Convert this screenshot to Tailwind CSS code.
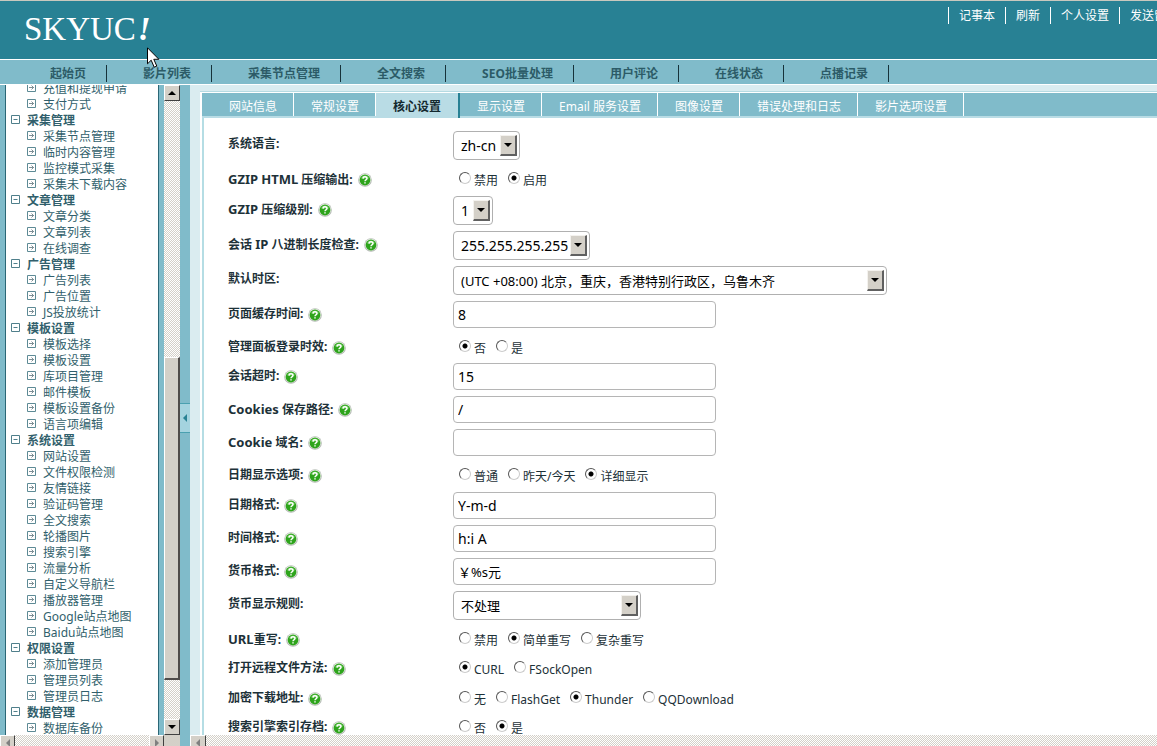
<!DOCTYPE html>
<html lang="zh-CN">
<head>
<meta charset="utf-8">
<title>SKYUC! 核心设置</title>
<script src="https://cdn.jsdelivr.net/npm/@tailwindcss/browser@4"></script>
</head>
<body class="h-screen overflow-hidden flex flex-col bg-[#80bbca] font-['Noto_Sans','Noto_Sans_CJK_SC',sans-serif] text-xs leading-4">

<svg class="hidden">
  <symbol id="minus" viewBox="0 0 10 10"><path d="M.5 .5h8v8h-8zM2.500 4.500h4" fill="none" stroke="#4f7f8b"/></symbol>
  <symbol id="leaf" viewBox="0 0 10 10"><path d="M.5 .5h8v8h-8z" fill="none" stroke="#5d8a95"/><path d="M2 4.500h5M4.500 2.500l2 2l-2 2" fill="none" stroke="#7d8f95"/></symbol>
  <symbol id="help" viewBox="0 0 14 14"><circle cx="7" cy="7" r="6.800" fill="#b3b9b3"/><circle cx="7" cy="6.800" r="6" fill="#e8f0e4"/><circle cx="7" cy="7" r="5.400" fill="#2ea41c"/><path d="M3 5.500a4.200 4.200 0 0 1 8 0z" fill="#6cc95a"/><path d="M5 5.600c.1-2.400 4-2.300 4 0c0 1.400-2 1.300-2 2.600M7 9.300v1.300" fill="none" stroke="#fff" stroke-width="1.500"/></symbol>
  <symbol id="down" viewBox="0 0 8 4"><path d="M0 0h8l-4 4z"/></symbol>
  <symbol id="up" viewBox="0 0 8 4"><path d="M0 4h8l-4-4z"/></symbol>
  <symbol id="left" viewBox="0 0 4 8"><path d="M4 0v8l-4-4z"/></symbol>
  <symbol id="right" viewBox="0 0 4 8"><path d="M0 0v8l4-4z"/></symbol>
</svg>

<header class="shrink-0 flex justify-between h-[59px] bg-[#288194] border-t border-[#c9c8be] text-white">
  <h1 class="pl-6 pt-2 font-['Liberation_Serif',serif] text-[33px] leading-10 flex gap-0.5">SKYUC<em class="font-bold">!</em></h1>
  <nav class="w-[209px] shrink-0 overflow-hidden flex items-start pt-1.5 whitespace-nowrap">
    <a href="#" class="shrink-0 border-l border-white px-2.5 leading-[17px]">记事本</a>
    <a href="#" class="shrink-0 border-l border-white px-2.5 leading-[17px]">刷新</a>
    <a href="#" class="shrink-0 border-l border-white px-2.5 leading-[17px]">个人设置</a>
    <a href="#" class="shrink-0 border-l border-white px-2.5 leading-[17px]">发送留言</a>
  </nav>
</header>
<svg class="absolute left-[147px] top-[47px] z-10" width="13" height="22" viewBox="0 0 13 22"><path d="M.5 .8v16l3.700-3.600l3 7l2.600-1.100l-3-6.800h5.100z" fill="#fff" stroke="#000"/></svg>

<nav id="menu" class="shrink-0 flex items-center h-[26px] border-y border-white pl-3.5 font-bold text-[#2c5b67]"></nav>

<div class="flex-1 min-h-0 flex">
  <div class="w-[180px] shrink-0 flex flex-col">
    <div class="flex-1 min-h-0 flex">
      <aside class="ml-[5px] mr-[5px] flex-1 overflow-hidden bg-white border-x border-[#2b6776] text-[#315f6c]">
        <ul id="tree" class="-mt-[5px]"></ul>
      </aside>
      <div class="w-4 flex flex-col bg-[repeating-conic-gradient(#fff_0_25%,#d4d0c8_0_50%)] bg-[length:2px_2px]">
        <button aria-label="向上滚动" class="h-4 shrink-0 flex items-center justify-center bg-[#d4d0c8] border border-t-white border-l-white border-r-[#404040] border-b-[#404040]"><svg class="w-2 h-1"><use href="#up"/></svg></button>
        <div class="flex-[257]"></div>
        <div class="flex-[322] bg-[#d4d0c8] border-t border-l border-r-2 border-b-2 border-t-white border-l-white border-r-[#504c4a] border-b-[#504c4a]"></div>
        <div class="flex-[39]"></div>
        <button aria-label="向下滚动" class="h-4 shrink-0 flex items-center justify-center bg-[#d4d0c8] border border-t-white border-l-white border-r-[#404040] border-b-[#404040]"><svg class="w-2 h-1"><use href="#down"/></svg></button>
      </div>
    </div>
    <div class="h-[11px] shrink-0 overflow-hidden flex bg-[repeating-conic-gradient(#fff_0_25%,#d4d0c8_0_50%)] bg-[length:2px_2px]">
      <button aria-label="向左滚动" class="w-[15px] h-4 flex items-center justify-center bg-[#d4d0c8] border border-t-white border-l-white border-r-[#404040] border-b-[#404040]"><svg class="w-1 h-2 fill-[#808080]"><use href="#left"/></svg></button>
      <div class="flex-1"></div>
      <button aria-label="向右滚动" class="w-[15px] h-4 flex items-center justify-center bg-[#d4d0c8] border border-t-white border-l-white border-r-[#404040] border-b-[#404040]"><svg class="w-1 h-2 fill-[#808080]"><use href="#right"/></svg></button>
      <div class="w-4 bg-[#d4d0c8]"></div>
    </div>
  </div>

  <div class="w-2.5 shrink-0 flex items-center">
    <button aria-label="收起菜单" class="w-full h-[30px] mb-[-4px] flex items-center justify-center bg-[#a4d3df] border-y border-[#4aa0b0]"><svg class="w-1 h-2 fill-[#288194]"><use href="#left"/></svg></button>
  </div>

  <div class="flex-1 min-w-0 flex flex-col">
    <div class="flex-1 min-h-0 overflow-hidden bg-[#daecf0] pt-1.5 pl-2.5">
      <div class="h-full border-t border-[#b5dae2] bg-white pt-px pl-0.5">
        <main class="h-full border-l-2 border-[#b5dde4]">
          <div id="tabs" role="tablist" class="-ml-0.5 pl-px flex h-[25px] bg-[#80bbca] border-b-2 border-[#b9dce5] text-white"></div>
          <form id="form" class="pl-6 pt-[13px] text-[#1d3138]"></form>
        </main>
      </div>
    </div>
    <div class="h-[11px] shrink-0 overflow-hidden flex bg-[repeating-conic-gradient(#fff_0_25%,#d4d0c8_0_50%)] bg-[length:2px_2px]">
      <button aria-label="主区向左滚动" class="w-4 h-4 flex items-center justify-center bg-[#d4d0c8] border border-t-white border-l-white border-r-[#404040] border-b-[#404040]"><svg class="w-1 h-2 fill-[#808080]"><use href="#left"/></svg></button>
    </div>
  </div>
</div>

<script>
const menu = ['起始页','影片列表','采集节点管理','全文搜索','SEO批量处理','用户评论','在线状态','点播记录'];
document.getElementById('menu').innerHTML = menu.map(t =>
  `<a href="#" class="border-r border-[#16323a] pl-9 pr-5 mt-0.5 h-[17px] leading-[17px] whitespace-nowrap">${t}</a>`).join('');

const tree = [
  [null, ['充值和提现申请','支付方式']],
  ['采集管理', ['采集节点管理','临时内容管理','监控模式采集','采集未下载内容']],
  ['文章管理', ['文章分类','文章列表','在线调查']],
  ['广告管理', ['广告列表','广告位置','JS投放统计']],
  ['模板设置', ['模板选择','模板设置','库项目管理','邮件模板','模板设置备份','语言项编辑']],
  ['系统设置', ['网站设置','文件权限检测','友情链接','验证码管理','全文搜索','轮播图片','搜索引擎','流量分析','自定义导航栏','播放器管理','Google站点地图','Baidu站点地图']],
  ['权限设置', ['添加管理员','管理员列表','管理员日志']],
  ['数据管理', ['数据库备份']]
];
document.getElementById('tree').innerHTML = tree.map(([head, items]) =>
  (head ? `<li class="flex h-4 gap-1.5 pl-[5px] pt-px leading-4 font-bold"><svg class="w-2.5 h-2.5 mt-0.5"><use href="#minus"/></svg>${head}</li>` : '') +
  items.map(t => `<li class="flex h-4 gap-1.5 pl-[21px] pt-px leading-4"><svg class="w-2.5 h-2.5 mt-0.5"><use href="#leaf"/></svg><a href="#">${t}</a></li>`).join('')).join('');

const tabs = ['网站信息','常规设置','核心设置','显示设置','Email 服务设置','图像设置','错误处理和日志','影片选项设置'];
document.getElementById('tabs').innerHTML = tabs.map((t, i) =>
  i === 2
    ? `<button role="tab" aria-selected="true" class="h-[25px] pt-0.5 px-[17px] bg-[#b9dce5] border-r-2 border-[#288194] font-bold text-[#14292f] whitespace-nowrap">${t}</button>`
    : i === 0
    ? `<button role="tab" class="pt-1 pl-[26px] pr-4 border-r border-white whitespace-nowrap">${t}</button>`
    : `<button role="tab" class="pt-1 pl-[17px] pr-4 border-r border-white whitespace-nowrap">${t}</button>`).join('');

const select = (id, text, cls) => `<div class="relative ${cls}"><select id="${id}" class="appearance-none w-full h-[29px] pl-[7px] border border-[#b0b0b0] rounded bg-white text-black">
  <option>${text}</option></select><span class="pointer-events-none absolute right-[3px] top-1 w-[17px] h-[21px] flex items-center justify-center bg-[#d4d0c8] border-t border-l border-r-2 border-b-2 border-t-[#f4f2ee] border-l-[#f4f2ee] border-r-[#606060] border-b-[#606060]"><svg class="w-2 h-1"><use href="#down"/></svg></span></div>`;
const input = (id, text, cls = 'text-sm') => `<input id="${id}" type="text" value="${text}" class="w-[263px] h-[27px] px-1 border border-[#b5b5b5] rounded bg-white text-black ${cls}">`;
const radios = (name, items, on) => `<div role="radiogroup" class="flex gap-2.5 pl-1.5 pt-1.5 whitespace-nowrap">${items.map((t, i) =>
  `<label class="flex gap-[3px]"><input type="radio" name="${name}" ${i === on ? 'checked' : ''} class="appearance-none w-3 h-3 rounded-full border border-t-[#555] border-l-[#555] border-r-[#ccc] border-b-[#ccc] bg-white checked:bg-[radial-gradient(circle,#000_2px,#fff_3px)]"><span class="pt-px">${t}</span></label>`).join('')}</div>`;
const latin = s => s.replace(/[A-Za-z]+/g, '<span class="text-[13px]">$&</span>');

// [label, has help icon, control, row height class]
const S = 'h-[35px]', I = 'h-[33px]', R = 'h-[30px]', r = 'h-[29px]';
const rows = [
  ['系统语言', 0, select('f0', 'zh-cn', 'w-[67px] text-sm'), S],
  ['GZIP HTML 压缩输出', 1, radios('f1', ['禁用','启用'], 1), R],
  ['GZIP 压缩级别', 1, select('f2', '1', 'w-10 text-sm'), S],
  ['会话 IP 八进制长度检查', 1, select('f3', '255.255.255.255', 'w-[137px] text-sm'), S],
  ['默认时区', 0, select('f4', '(UTC +08:00) 北京，重庆，香港特别行政区，乌鲁木齐', 'w-[434px] text-[13px]'), S],
  ['页面缓存时间', 1, input('f5', '8'), I],
  ['管理面板登录时效', 1, radios('f6', ['否','是'], 0), r],
  ['会话超时', 1, input('f7', '15'), I],
  ['Cookies 保存路径', 1, input('f8', '/'), I],
  ['Cookie 域名', 1, input('f9', ''), I],
  ['日期显示选项', 1, radios('f10', ['普通','昨天/今天','详细显示'], 2), R],
  ['日期格式', 1, input('f11', 'Y-m-d'), I],
  ['时间格式', 1, input('f12', 'h:i A'), I],
  ['货币格式', 1, input('f13', '￥%s元', 'text-[13px]'), I],
  ['货币显示规则', 0, select('f14', '不处理', 'w-[188px] text-[13px]'), S],
  ['URL重写', 1, radios('f15', ['禁用','简单重写','复杂重写'], 1), r],
  ['打开远程文件方法', 1, radios('f16', ['CURL','FSockOpen'], 0), R],
  ['加密下载地址', 1, radios('f17', ['无','FlashGet','Thunder','QQDownload'], 2), r],
  ['搜索引擎索引存档', 1, radios('f18', ['否','是'], 1), r]
];
document.getElementById('form').innerHTML = rows.map(([label, help, control, h], i) =>
  `<div class="flex items-start ${h}"><div class="w-[225px] shrink-0 flex gap-[5px] pt-[5px] font-bold whitespace-nowrap"><label for="f${i}">${latin(label)}:</label>${help ? '<svg class="w-3.5 h-3.5 mt-0.5"><use href="#help"/></svg>' : ''}</div>${control}</div>`).join('');
</script>
</body>
</html>
